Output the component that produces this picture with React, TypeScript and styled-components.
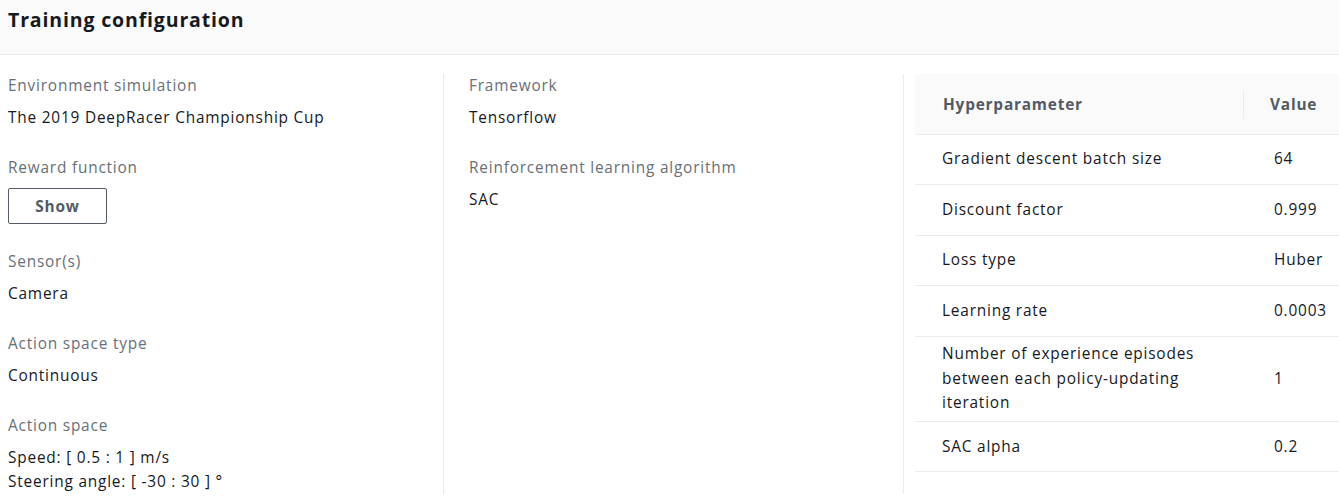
import React from "react";
import styled, { createGlobalStyle } from "styled-components";

const GlobalStyle = createGlobalStyle`
  * { box-sizing: border-box; }
  html, body { margin: 0; padding: 0; background: #ffffff; }
  body {
    font-family: "Open Sans", "Noto Sans", sans-serif;
    font-size: 15.4px;
    line-height: 24px;
    letter-spacing: 0.8px;
    color: #16191f;
  }
`;

const Page = styled.div`
  width: 1339px;
  background: #ffffff;
`;

const Header = styled.header`
  height: 55px;
  background: #fafafa;
  border-bottom: 1px solid #eaeded;
  display: flex;
  align-items: center;
  padding: 0 8px 0 8px;
`;

const Title = styled.h2`
  margin: 0;
  margin-top: -14px;
  font-size: 19.5px;
  font-weight: 700;
  line-height: 26px;
  letter-spacing: 0.85px;
  color: #16191f;
`;

const Body = styled.div`
  display: grid;
  grid-template-columns: 444px 460px 1fr;
  padding: 19px 0 7px 0;
`;

const Column = styled.div<{ $pad: number; $divider?: boolean }>`
  padding-left: ${(p) => p.$pad}px;
  border-right: ${(p) => (p.$divider ? "1px solid #eaeded" : "none")};
  display: flex;
  flex-direction: column;
  gap: 26px;
`;

const Pair = styled.div`
  display: flex;
  flex-direction: column;
  gap: 8px;
`;

const Label = styled.div`
  color: #687078;
  line-height: 24px;
`;

const Value = styled.div`
  color: #16191f;
  line-height: 24px;
`;

const ShowButton = styled.button`
  align-self: flex-start;
  width: 99px;
  height: 36px;
  border: 1px solid #545b64;
  border-radius: 2px;
  background: #ffffff;
  color: #545b64;
  font-family: inherit;
  font-size: 15.4px;
  font-weight: 700;
  letter-spacing: 0.8px;
  padding: 0;
  cursor: pointer;
`;

const TableWrap = styled.div`
  display: flex;
  flex-direction: column;
`;

const Row = styled.div<{ $head?: boolean }>`
  display: grid;
  grid-template-columns: 328px 1fr;
  align-items: center;
  min-height: ${(p) => (p.$head ? 61 : 50.4)}px;
  background: ${(p) => (p.$head ? "#fafafa" : "#ffffff")};
  border-bottom: 1px solid #eaeded;
`;

const Cell = styled.div<{ $second?: boolean }>`
  padding: 5.5px 27px 5.5px ${(p) => (p.$second ? 31 : 27)}px;
  line-height: 24.5px;
  color: #16191f;
`;

const HeadCell = styled.div<{ $divider?: boolean }>`
  padding: 0 16px 0 ${(p) => (p.$divider ? 26 : 28)}px;
  font-weight: 700;
  color: #545b64;
  line-height: 29px;
  border-left: ${(p) => (p.$divider ? "1px solid #eaeded" : "none")};
`;

const rows: [string, string][] = [
  ["Gradient descent batch size", "64"],
  ["Discount factor", "0.999"],
  ["Loss type", "Huber"],
  ["Learning rate", "0.0003"],
  ["Number of experience episodes between each policy-updating iteration", "1"],
  ["SAC alpha", "0.2"],
];

export default function App() {
  return (
    <Page>
      <GlobalStyle />
      <Header>
        <Title>Training configuration</Title>
      </Header>
      <Body>
        <Column $pad={8} $divider>
          <Pair>
            <Label>Environment simulation</Label>
            <Value>The 2019 DeepRacer Championship Cup</Value>
          </Pair>
          <Pair>
            <Label>Reward function</Label>
            <ShowButton>Show</ShowButton>
          </Pair>
          <Pair>
            <Label>Sensor(s)</Label>
            <Value>Camera</Value>
          </Pair>
          <Pair>
            <Label>Action space type</Label>
            <Value>Continuous</Value>
          </Pair>
          <Pair>
            <Label>Action space</Label>
            <Value>
              Speed: [ 0.5 : 1 ] m/s
              <br />
              Steering angle: [ -30 : 30 ] °
            </Value>
          </Pair>
        </Column>
        <Column $pad={25} $divider>
          <Pair>
            <Label>Framework</Label>
            <Value>Tensorflow</Value>
          </Pair>
          <Pair>
            <Label>Reinforcement learning algorithm</Label>
            <Value>SAC</Value>
          </Pair>
        </Column>
        <Column $pad={11}>
          <TableWrap>
            <Row $head>
              <HeadCell>Hyperparameter</HeadCell>
              <HeadCell $divider>Value</HeadCell>
            </Row>
            {rows.map(([k, v]) => (
              <Row key={k}>
                <Cell>{k}</Cell>
                <Cell $second>{v}</Cell>
              </Row>
            ))}
          </TableWrap>
        </Column>
      </Body>
    </Page>
  );
}
